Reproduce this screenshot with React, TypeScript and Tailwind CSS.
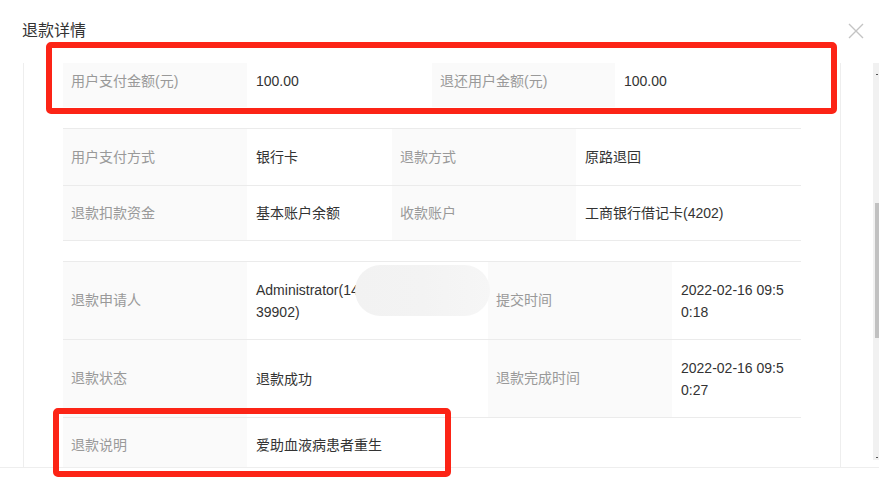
import React from 'react'

type Cell = { label: string; value: React.ReactNode }

const font = { fontFamily: '"Liberation Sans", "Noto Sans CJK SC", sans-serif' }

function Row({ cells, cols, h, last }: { cells: Cell[]; cols: string; h: string; last?: boolean }) {
  return (
    <div className={`grid ${cols} ${h} ${last ? '' : 'border-b border-[#ebebeb]'}`}>
      {cells.map((c, i) => (
        <React.Fragment key={i}>
          <div className="flex items-center bg-[#fafafa] pl-2 text-[14px] text-[#999]">{c.label}</div>
          <div className="flex items-center pl-[9px] text-[14px] leading-[22px] text-[#333]">{c.value}</div>
        </React.Fragment>
      ))}
    </div>
  )
}

function TwoLine({ a, b }: { a: string; b: string }) {
  return (
    <div className="flex flex-col">
      <span>{a}</span>
      <span>{b}</span>
    </div>
  )
}

export default function App() {
  return (
    <div className="relative h-[482px] w-[879px] overflow-hidden bg-white" style={font}>
      {/* header */}
      <div className="flex h-[63px] items-start justify-between">
        <h2 className="pl-[22px] pt-[19px] text-[16px] leading-[24px] text-[#333]">退款详情</h2>
        <button className="mr-[15px] mt-[23px] text-[#c4c4c4]" aria-label="关闭">
          <svg width="16" height="16" viewBox="0 0 16 16" fill="none" stroke="currentColor" strokeWidth="1.4">
            <path d="M1 1L15 15M15 1L1 15" />
          </svg>
        </button>
      </div>

      {/* body */}
      <div className="flex h-[404px]">
        <div className="ml-[23px] h-full w-[818px] overflow-hidden border-x border-[#eeeeee] px-[39px]">
          <div className="-mt-[8px]">
            <Row
              cols="grid-cols-[184px_185px_183px_185px]"
              h="h-[52px]"
              last
              cells={[
                { label: '用户支付金额(元)', value: '100.00' },
                { label: '退还用户金额(元)', value: '100.00' },
              ]}
            />
          </div>

          <div className="mt-[21px] border-t border-[#ebebeb]">
            <Row
              cols="grid-cols-[184px_145px_184px_224px]"
              h="h-[57px]"
              cells={[
                { label: '用户支付方式', value: '银行卡' },
                { label: '退款方式', value: '原路退回' },
              ]}
            />
            <Row
              cols="grid-cols-[184px_145px_184px_224px]"
              h="h-[55px]"
              cells={[
                { label: '退款扣款资金', value: '基本账户余额' },
                { label: '收款账户', value: '工商银行借记卡(4202)' },
              ]}
            />
          </div>

          <div className="mt-[20px] border-t border-[#ebebeb]">
            <Row
              cols="grid-cols-[184px_241px_184px_128px]"
              h="h-[78px]"
              cells={[
                { label: '退款申请人', value: <TwoLine a="Administrator(14" b="39902)" /> },
                { label: '提交时间', value: <TwoLine a="2022-02-16 09:5" b="0:18" /> },
              ]}
            />
            <Row
              cols="grid-cols-[184px_241px_184px_128px]"
              h="h-[78px]"
              cells={[
                { label: '退款状态', value: '退款成功' },
                { label: '退款完成时间', value: <TwoLine a="2022-02-16 09:5" b="0:27" /> },
              ]}
            />
            <div className="grid h-[60px] grid-cols-[184px_241px_184px_128px]">
              <div className="flex items-start bg-[#fafafa] pl-2 pt-[17px] text-[14px] text-[#999]">退款说明</div>
              <div className="flex items-start pl-[9px] pt-[17px] text-[14px] text-[#333]">爱助血液病患者重生</div>
              <div />
              <div />
            </div>
          </div>
        </div>

        {/* scrollbar */}
        <div className="relative ml-[32px] h-[397px] w-[6px] bg-[#f1f1f1]">
          <div className="absolute left-[3px] top-[11px] h-px w-[2px] bg-[#555]" />
          <div className="ml-[2px] mt-[140px] h-[135px] w-[4px] bg-[#c1c1c1]" />
          <div className="absolute bottom-[2px] left-[3px] h-px w-[2px] bg-[#555]" />
        </div>
      </div>

      {/* footer */}
      <div className="h-[15px] border-t border-[#eeeeee]" />

      {/* privacy blur */}
      <div className="absolute left-[355px] top-[265px] h-[51px] w-[135px] rounded-full bg-gradient-to-r from-[#f2f2f2] via-[#f3f3f3] to-[#f6f6f6]" />

      {/* annotation boxes */}
      <div className="pointer-events-none absolute left-[46px] top-[42px] h-[72px] w-[791px] rounded-[5px] border-[6px] border-[#fc2416]" />
      <div className="pointer-events-none absolute left-[53px] top-[408px] h-[69px] w-[398px] rounded-[5px] border-[6px] border-[#fc2416]" />
    </div>
  )
}
